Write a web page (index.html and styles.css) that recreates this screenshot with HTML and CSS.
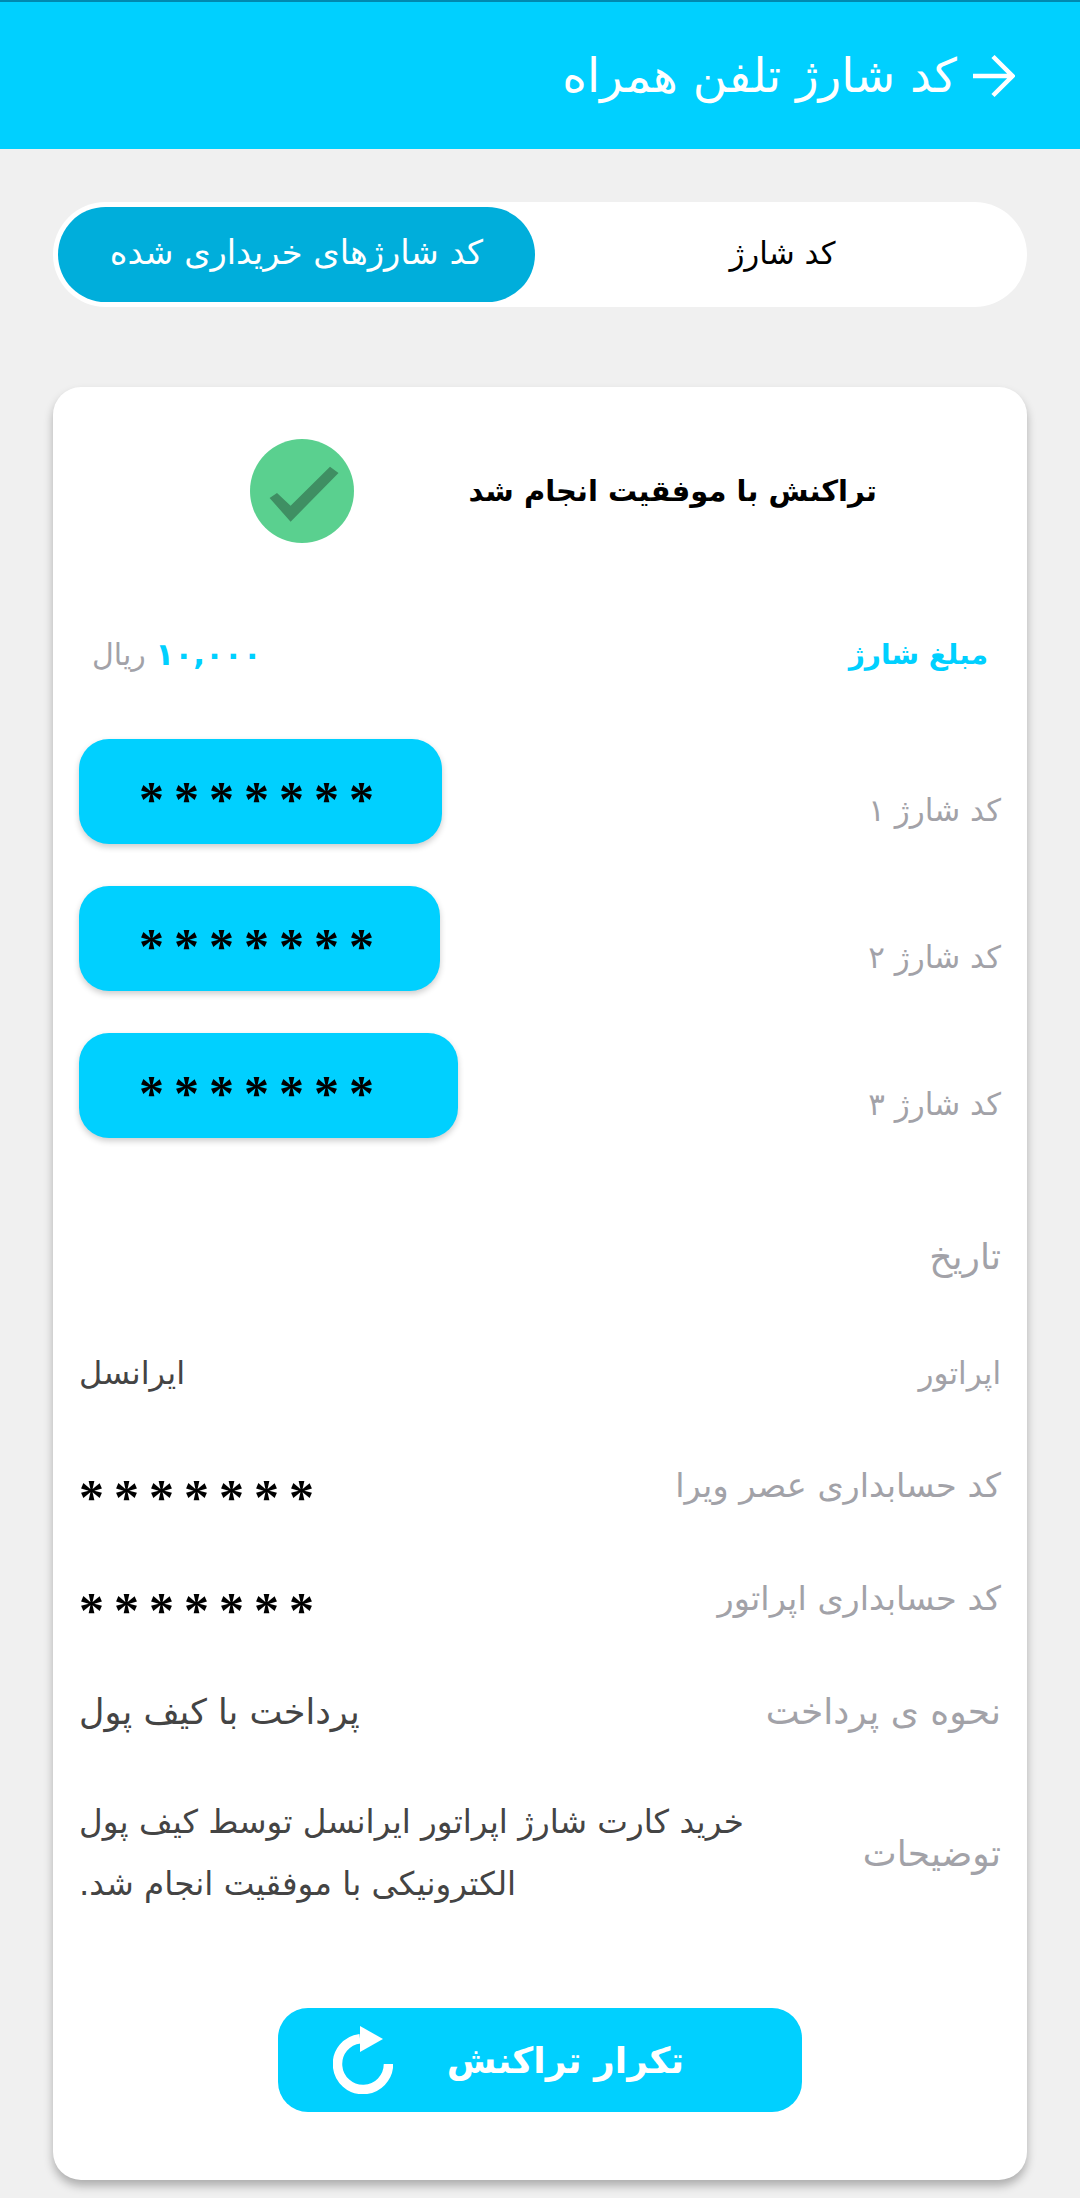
FILE: index.html
```html
<!DOCTYPE html>
<html lang="fa" dir="rtl">
<head>
<meta charset="utf-8">
<title>کد شارژ تلفن همراه</title>
<link rel="stylesheet" href="styles.css">
</head>
<body>
<header class="header">
  <svg class="back" viewBox="0 0 44 44" width="44" height="44"><path d="M2 22H41M22 2.5L41.5 22L22 41.5" fill="none" stroke="#fff" stroke-width="4.5"/></svg>
  <h1 class="title">کد شارژ تلفن همراه</h1>
</header>
<main class="page">
  <div class="tabs">
    <div class="tab">کد شارژ</div>
    <div class="tab tab-active">کد شارژهای خریداری شده</div>
  </div>
  <section class="card">
    <div class="status">
      <div class="status-text">تراکنش با موفقیت انجام شد</div>
      <div class="status-icon">
        <svg viewBox="0 0 104 104" width="104" height="104"><circle cx="52" cy="52" r="52" fill="#5ad08f"/><path d="M19.6 59L27 54L40.6 66.7L80 27.7L88.5 34L40.6 82.7Z" fill="#3f8f63"/></svg>
      </div>
    </div>
    <div class="row row-amount">
      <span class="amount-label">مبلغ شارژ</span>
      <span class="amount-value"><b>۱۰,۰۰۰</b> ریال</span>
    </div>
    <div class="row row-code">
      <span class="label label-code">کد شارژ ۱</span>
      <span class="code code-a"><span class="stars">*******</span></span>
    </div>
    <div class="row row-code">
      <span class="label label-code">کد شارژ ۲</span>
      <span class="code code-b"><span class="stars">*******</span></span>
    </div>
    <div class="row row-code">
      <span class="label label-code">کد شارژ ۳</span>
      <span class="code code-c"><span class="stars">*******</span></span>
    </div>
    <div class="row row-date"><span class="label label-lg">تاریخ</span></div>
    <div class="row row-info"><span class="label">اپراتور</span><span class="value">ایرانسل</span></div>
    <div class="row row-info"><span class="label label-md">کد حسابداری عصر ویرا</span><span class="stars">*******</span></div>
    <div class="row row-info"><span class="label label-md">کد حسابداری اپراتور</span><span class="stars">*******</span></div>
    <div class="row row-info"><span class="label label-lg">نحوه ی پرداخت</span><span class="value value-lg">پرداخت با کیف پول</span></div>
    <div class="row row-desc"><span class="label label-lg">توضیحات</span><span class="value value-desc">خرید کارت شارژ اپراتور ایرانسل توسط کیف پول الکترونیکی با موفقیت انجام شد.</span></div>
    <div class="action">
      <button class="repeat" type="button">
        <span>تکرار تراکنش</span>
        <svg viewBox="0 0 60 68" width="60" height="68"><path d="M27 12.7A25.5 25.5 0 1 0 55.5 38" fill="none" stroke="#fff" stroke-width="9.5"/><path d="M27 0L50 13L27 26Z" fill="#fff"/></svg>
      </button>
    </div>
  </section>
</main>
</body>
</html>
```
FILE: styles.css
```css
* { box-sizing: border-box; }
html, body { margin: 0; padding: 0; }
body {
  width: 1080px;
  height: 2198px;
  overflow: hidden;
  background: #f0f0f0;
  font-family: "DejaVu Sans", sans-serif;
  color: #444;
}
.header {
  height: 149px;
  background: #00d0ff;
  border-top: 2px solid #0088b0;
  padding: 0 65px 0 0;
  display: flex;
  align-items: center;
  gap: 14px;
  color: #fff;
}
.back { flex: none; }
.title { margin: 0; font-size: 47px; font-weight: 400; line-height: 1; }
.page { padding: 53px 53px 0; }
.tabs {
  height: 105px;
  background: #fff;
  border-radius: 53px;
  padding: 5px;
  display: flex;
}
.tab {
  flex: 1;
  display: flex;
  align-items: center;
  justify-content: center;
  padding: 0 0 4px 8px;
  font-size: 31px;
  color: #000;
  border-radius: 48px;
}
.tab-active { flex: none; width: 477px; padding-left: 0; font-size: 33.7px; background: #00aedb; color: #fff; }
.card {
  margin-top: 80px;
  height: 1793px;
  background: #fff;
  border-radius: 28px;
  box-shadow: 0 6px 10px rgba(0,0,0,.28);
  padding: 0 26px;
}
.status {
  height: 208px;
  display: flex;
  align-items: center;
  padding: 0 124px 0 0;
}
.status-text { width: 523px; font-size: 29px; font-weight: 700; color: #000; }
.status-icon { width: 104px; height: 104px; }
.status-icon svg { display: block; }
.row { display: flex; justify-content: space-between; align-items: center; }
.row-amount { height: 123px; padding: 0 13px 5px 0; }
.amount-label { font-size: 28px; font-weight: 700; color: #00d0ff; }
.amount-value { padding-left: 13px; font-size: 30px; color: #a2a2a8; }
.amount-value b { color: #00d0ff; font-size: 31px; letter-spacing: -6px; margin-right: 8px; }
.label { font-size: 31px; color: #a2a2a8; }
.label-code { margin-top: 36px; }
.label-md { font-size: 33.5px; }
.label-lg { font-size: 36px; }
.row-code { height: 147px; }
.code {
  height: 105px;
  padding: 0 0 8px 60px;
  background: #00d0ff;
  border-radius: 30px;
  box-shadow: 0 3px 6px rgba(0,0,0,.2);
  display: flex;
  align-items: center;
  justify-content: flex-end;
}
.code-a { width: 363px; }
.code-b { width: 361px; }
.code-c { width: 379px; }
.stars {
  color: #000;
  font-family: "Liberation Serif", serif;
  font-size: 50px;
  font-weight: 700;
  line-height: 1;
  letter-spacing: 10px;
  padding-top: 22px;
}
.row-date { height: 136px; align-items: flex-end; padding-bottom: 18px; }
.row-info { height: 113px; }
.row-date + .row-info { margin-top: 21px; }
.value { font-size: 32px; color: #444; }
.value-lg { font-size: 35px; }
.row-desc { height: 170px; }
.value-desc { width: 690px; font-size: 32.6px; text-align: left; line-height: 62px; }
.action { margin-top: 70px; display: flex; justify-content: center; }
.repeat {
  width: 524px;
  height: 104px;
  padding: 0 118px 0 0;
  background: #00d0ff;
  border: 0;
  border-radius: 30px;
  color: #fff;
  font: 700 36px "DejaVu Sans", sans-serif;
  display: flex;
  align-items: center;
  justify-content: flex-start;
  gap: 54px;
}
.repeat svg { flex: none; }
```
